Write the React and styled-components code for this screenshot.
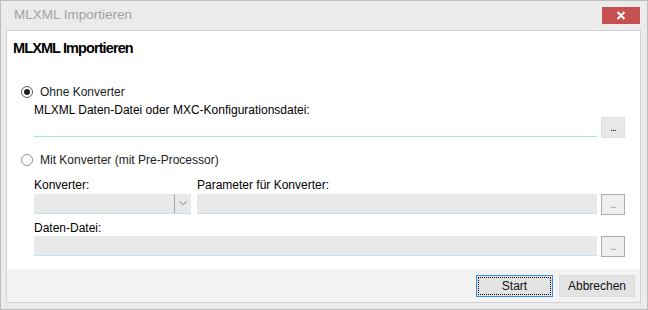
import React from "react";
import styled, { createGlobalStyle } from "styled-components";

const Global = createGlobalStyle`
  html, body { margin: 0; padding: 0; background: #ffffff; }
  body { font-family: "Liberation Sans", Arial, sans-serif; }
  * { box-sizing: border-box; }
`;

const Window = styled.div`
  width: 648px;
  height: 310px;
  border: 1px solid #bdbdbd;
  background: #ebebeb;
  display: flex;
  flex-direction: column;
`;

const TitleBar = styled.div`
  height: 29px;
  flex: none;
  display: flex;
  justify-content: space-between;
  padding: 0 7px 0 13px;
`;

const TitleText = styled.div`
  font-size: 13.5px;
  line-height: 28px;
  color: #a3a3a3;
`;

const CloseButton = styled.div`
  margin-top: 6px;
  width: 38px;
  height: 17px;
  background: #c75050;
  display: flex;
  align-items: center;
  justify-content: center;
`;

const Client = styled.div`
  flex: 1;
  margin: 0 6px 6px 5px;
  border: 1px solid #d2d2d2;
  display: flex;
  flex-direction: column;
`;

const Content = styled.div`
  flex: 1;
  background: #ffffff;
  padding: 7px 15px 0 6px;
  display: flex;
  flex-direction: column;
`;

const Heading = styled.div`
  font-size: 14.5px;
  font-weight: bold;
  letter-spacing: -0.9px;
  line-height: 20px;
  color: #000;
`;

const RadioRow = styled.div`
  margin-top: ${(p) => p.$mt}px;
  margin-left: 8px;
  display: flex;
  align-items: center;
  height: 16px;
  font-size: 12px;
  color: #222;
`;

const RadioCircle = styled.span`
  width: 12px;
  height: 12px;
  border-radius: 50%;
  border: 1px solid ${(p) => (p.$checked ? "#4f5d6b" : "#8e8e8e")};
  background: #fff;
  display: flex;
  align-items: center;
  justify-content: center;
  margin-right: 7px;
  &::after {
    content: "";
    width: 6px;
    height: 6px;
    border-radius: 50%;
    background: ${(p) => (p.$checked ? "#1f1f1f" : "transparent")};
  }
`;

const Fields = styled.div`
  margin-left: 21px;
  display: flex;
  flex-direction: column;
`;

const LabelRow = styled.div`
  margin-top: ${(p) => p.$mt}px;
  display: flex;
  gap: 6px;
  font-size: 12px;
  line-height: 13px;
  color: #000;
`;

const Label = styled.div`
  width: ${(p) => (p.$w ? `${p.$w}px` : "auto")};
  flex: ${(p) => (p.$w ? "none" : "1")};
`;

const InputRow = styled.div`
  margin-top: ${(p) => p.$mt}px;
  display: flex;
  align-items: flex-start;
  gap: 4px;
`;

const TextBox = styled.div`
  flex: 1;
  height: 20px;
  background: ${(p) => (p.$disabled ? "#e9e9e9" : "#ffffff")};
  border-bottom: 1px solid ${(p) => (p.$disabled ? "#c8dfee" : "#a9dff3")};
`;

const Combo = styled.div`
  width: 157px;
  height: 20px;
  margin-right: 2px;
  background: #e9e9e9;
  border-bottom: 1px solid #c8dfee;
  display: flex;
  justify-content: flex-end;
`;

const ComboArrow = styled.div`
  width: 17px;
  height: 19px;
  border-left: 1px solid #a5a5a5;
  display: flex;
  align-items: center;
  justify-content: center;
`;

const DotsButton = styled.div`
  width: 24px;
  height: 21px;
  background: ${(p) => (p.$disabled ? "#efefef" : "#e8e8e8")};
  border: 1px solid ${(p) => (p.$disabled ? "#adadad" : "#dedede")};
  color: ${(p) => (p.$disabled ? "#8c8c8c" : "#1a1a1a")};
  font-size: 11px;
  line-height: 19px;
  text-align: center;
  letter-spacing: -1px;
`;

const Footer = styled.div`
  height: 33px;
  flex: none;
  background: #f3f3f3;
  display: flex;
  justify-content: flex-end;
  gap: 6px;
  padding: 6px 5px 0 0;
`;

const Button = styled.div`
  width: ${(p) => p.$w}px;
  height: 22px;
  background: #e3e3e3;
  border: 1px solid ${(p) => (p.$primary ? "#3c8fe0" : "#dcdcdc")};
  padding: 1px;
  font-size: 12px;
  color: #111;
  display: flex;
`;

const ButtonInner = styled.div`
  flex: 1;
  border: 1px dotted ${(p) => (p.$focus ? "#000" : "transparent")};
  display: flex;
  align-items: center;
  justify-content: center;
`;

export default function App() {
  return (
    <>
      <Global />
      <Window>
        <TitleBar>
          <TitleText>MLXML Importieren</TitleText>
          <CloseButton>
            <svg width="10" height="9" viewBox="0 0 10 9">
              <path d="M1.5 1 L8.5 8 M8.5 1 L1.5 8" stroke="#fff" strokeWidth="2" />
            </svg>
          </CloseButton>
        </TitleBar>
        <Client>
          <Content>
            <Heading>MLXML Importieren</Heading>
            <RadioRow $mt={26}>
              <RadioCircle $checked />
              Ohne Konverter
            </RadioRow>
            <Fields>
              <LabelRow $mt={4}>
                <Label>MLXML Daten-Datei oder MXC-Konfigurationsdatei:</Label>
              </LabelRow>
              <InputRow $mt={0}>
                <TextBox />
                <DotsButton>...</DotsButton>
              </InputRow>
            </Fields>
            <RadioRow $mt={14}>
              <RadioCircle />
              Mit Konverter (mit Pre-Processor)
            </RadioRow>
            <Fields>
              <LabelRow $mt={11}>
                <Label $w={157}>Konverter:</Label>
                <Label>Parameter für Konverter:</Label>
              </LabelRow>
              <InputRow $mt={2}>
                <Combo>
                  <ComboArrow>
                    <svg width="8" height="5" viewBox="0 0 8 5">
                      <path d="M0.5 0.5 L4 4 L7.5 0.5" stroke="#ababab" strokeWidth="1.2" fill="none" />
                    </svg>
                  </ComboArrow>
                </Combo>
                <TextBox $disabled />
                <DotsButton $disabled>...</DotsButton>
              </InputRow>
              <LabelRow $mt={7}>
                <Label>Daten-Datei:</Label>
              </LabelRow>
              <InputRow $mt={1}>
                <TextBox $disabled />
                <DotsButton $disabled>...</DotsButton>
              </InputRow>
            </Fields>
          </Content>
          <Footer>
            <Button $w={77} $primary>
              <ButtonInner $focus>Start</ButtonInner>
            </Button>
            <Button $w={76}>
              <ButtonInner>Abbrechen</ButtonInner>
            </Button>
          </Footer>
        </Client>
      </Window>
    </>
  );
}
